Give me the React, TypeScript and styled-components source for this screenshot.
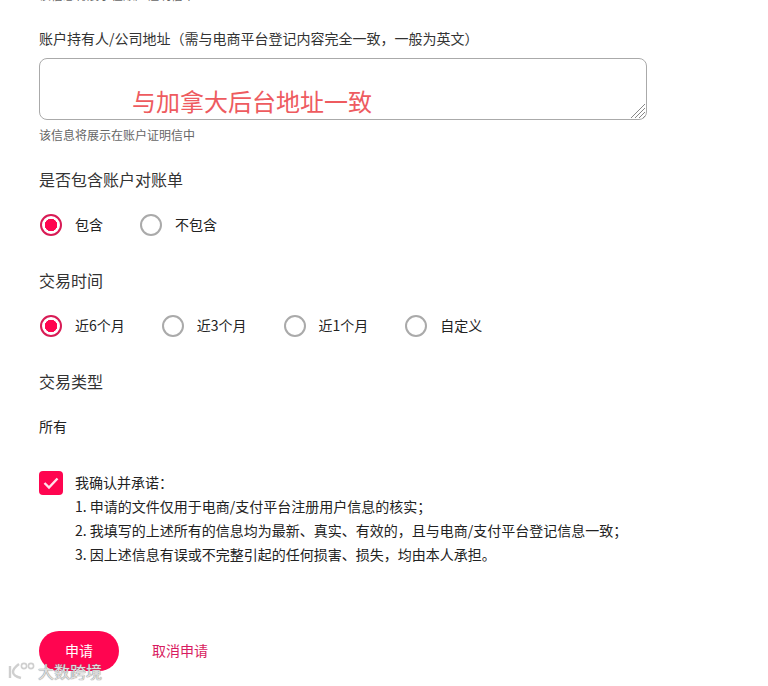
import React from "react";
import styled, { createGlobalStyle } from "styled-components";

const Global = createGlobalStyle`
  html, body {
    margin: 0;
    height: 686px;
    overflow: hidden;
    background: #fff;
  }
`;

const Page = styled.div`
  --rose: #ff0550;
  --ink: #222;
  position: relative;
  width: 768px;
  height: 686px;
  overflow: hidden;
  padding-left: 39px;
  box-sizing: border-box;
  font-family: "Noto Sans CJK SC", "Liberation Sans", sans-serif;
  color: var(--ink);
`;

const Clipped = styled.div`
  margin-top: -15px;
  height: 20px;
  line-height: 20px;
  font-size: 12px;
  color: #666;
`;

const FieldLabel = styled.div`
  margin-top: 23px;
  height: 20px;
  line-height: 20px;
  font-size: 14px;
  color: #333;
`;

const TextBox = styled.div`
  position: relative;
  box-sizing: border-box;
  width: 608px;
  height: 62px;
  margin-top: 10px;
  border: 1px solid #aaa;
  border-radius: 8px;
`;

const Note = styled.span`
  position: absolute;
  left: 92px;
  top: 24px;
  line-height: 36px;
  font-size: 24px;
  color: #ee5b5f;
  white-space: nowrap;
`;

const Grip = styled.svg`
  position: absolute;
  right: 0;
  bottom: 0;
  width: 16px;
  height: 16px;
`;

const Hint = styled.div`
  margin-top: 5px;
  height: 20px;
  line-height: 20px;
  font-size: 12px;
  color: #666;
`;

const Heading = styled.div<{ $top: number }>`
  margin-top: ${(p) => p.$top}px;
  height: 24px;
  line-height: 24px;
  font-size: 16px;
  color: #333;
`;

const RadioRow = styled.div`
  display: flex;
  align-items: center;
  gap: 36px;
  height: 24px;
  margin-top: 22px;
`;

const Radio = styled.label`
  display: flex;
  align-items: center;
  gap: 13px;
  font-size: 14px;
  line-height: 24px;
`;

const RadioText = styled.span`
  padding-bottom: 3px;
`;

const Dot = styled.span<{ $on?: boolean }>`
  box-sizing: border-box;
  display: block;
  width: 22px;
  height: 22px;
  margin-left: 1px;
  border-radius: 50%;
  border: 2px solid ${(p) => (p.$on ? "#d81b55" : "#aaa")};
  background: ${(p) => (p.$on ? "radial-gradient(circle, #ff0550 0 6px, #fff 6.5px)" : "#fff")};
`;

const Plain = styled.div`
  margin-top: 23px;
  height: 20px;
  line-height: 20px;
  font-size: 14px;
`;

const Consent = styled.div`
  display: flex;
  gap: 12px;
  margin-top: 35px;
`;

const Check = styled.span`
  display: flex;
  align-items: center;
  justify-content: center;
  width: 24px;
  height: 24px;
  flex: none;
  border-radius: 4px;
  background: var(--rose);
`;

const Terms = styled.div`
  margin-top: -1px;
  font-size: 14px;
  line-height: 24px;
  color: #222;
`;

const Actions = styled.div`
  display: flex;
  align-items: center;
  gap: 33px;
  margin-top: 65px;
`;

const Submit = styled.button`
  width: 80px;
  height: 40px;
  padding: 0 0 3px;
  border: none;
  border-radius: 20px;
  background: var(--rose);
  color: #fff;
  font: inherit;
  font-size: 14px;
`;

const Cancel = styled.button`
  padding: 0 0 3px;
  border: none;
  background: none;
  color: #d81b60;
  font: inherit;
  font-size: 14px;
`;

const Watermark = styled.div`
  position: absolute;
  left: 7px;
  top: 661px;
  display: flex;
  align-items: center;
  gap: 3px;
  font-size: 16px;
  line-height: 20px;
  color: rgba(235, 235, 235, 0.9);
  text-shadow: 0 0 1px #888, 0 0 1px #888;
`;

const periods = ["近6个月", "近3个月", "近1个月", "自定义"];

export default function App() {
  return (
    <Page>
      <Global />
      <Clipped>该信息将展示在账户证明信中</Clipped>
      <FieldLabel>账户持有人/公司地址（需与电商平台登记内容完全一致，一般为英文）</FieldLabel>
      <TextBox>
        <Note>与加拿大后台地址一致</Note>
        <Grip viewBox="0 0 16 16" fill="none" stroke="#888" strokeWidth="1">
          <path d="M1 15 15 1M5 15 15 5M9 15l6-6M13 15l2-2" />
        </Grip>
      </TextBox>
      <Hint>该信息将展示在账户证明信中</Hint>
      <Heading $top={22}>是否包含账户对账单</Heading>
      <RadioRow>
        <Radio>
          <Dot $on />
          <RadioText>包含</RadioText>
        </Radio>
        <Radio>
          <Dot />
          <RadioText>不包含</RadioText>
        </Radio>
      </RadioRow>
      <Heading $top={31}>交易时间</Heading>
      <RadioRow>
        {periods.map((o, i) => (
          <Radio key={o}>
            <Dot $on={i === 0} />
            <RadioText>{o}</RadioText>
          </Radio>
        ))}
      </RadioRow>
      <Heading $top={31}>交易类型</Heading>
      <Plain>所有</Plain>
      <Consent>
        <Check>
          <svg width="16" height="14" viewBox="0 0 16 14" fill="none" stroke="#ffe3ec" strokeWidth="2.4">
            <path d="M1.5 7l4.5 4.5L14.5 2.5" />
          </svg>
        </Check>
        <Terms>
          我确认并承诺：
          <br />
          1. 申请的文件仅用于电商/支付平台注册用户信息的核实；
          <br />
          2. 我填写的上述所有的信息均为最新、真实、有效的，且与电商/支付平台登记信息一致；
          <br />
          3. 因上述信息有误或不完整引起的任何损害、损失，均由本人承担。
        </Terms>
      </Consent>
      <Actions>
        <Submit>申请</Submit>
        <Cancel>取消申请</Cancel>
      </Actions>
      <Watermark>
        <svg width="28" height="20" viewBox="0 0 28 20" fill="none" stroke="#cfcfcf" strokeWidth="2.4">
          <path d="M3 5v12M12 3C8 6 6 9 6 11c0 3 4 5 8 6" />
          <circle cx="17" cy="5" r="2.6" strokeWidth="1.6" />
          <circle cx="24" cy="5" r="2.6" strokeWidth="1.6" />
        </svg>
        大数跨境
      </Watermark>
    </Page>
  );
}
